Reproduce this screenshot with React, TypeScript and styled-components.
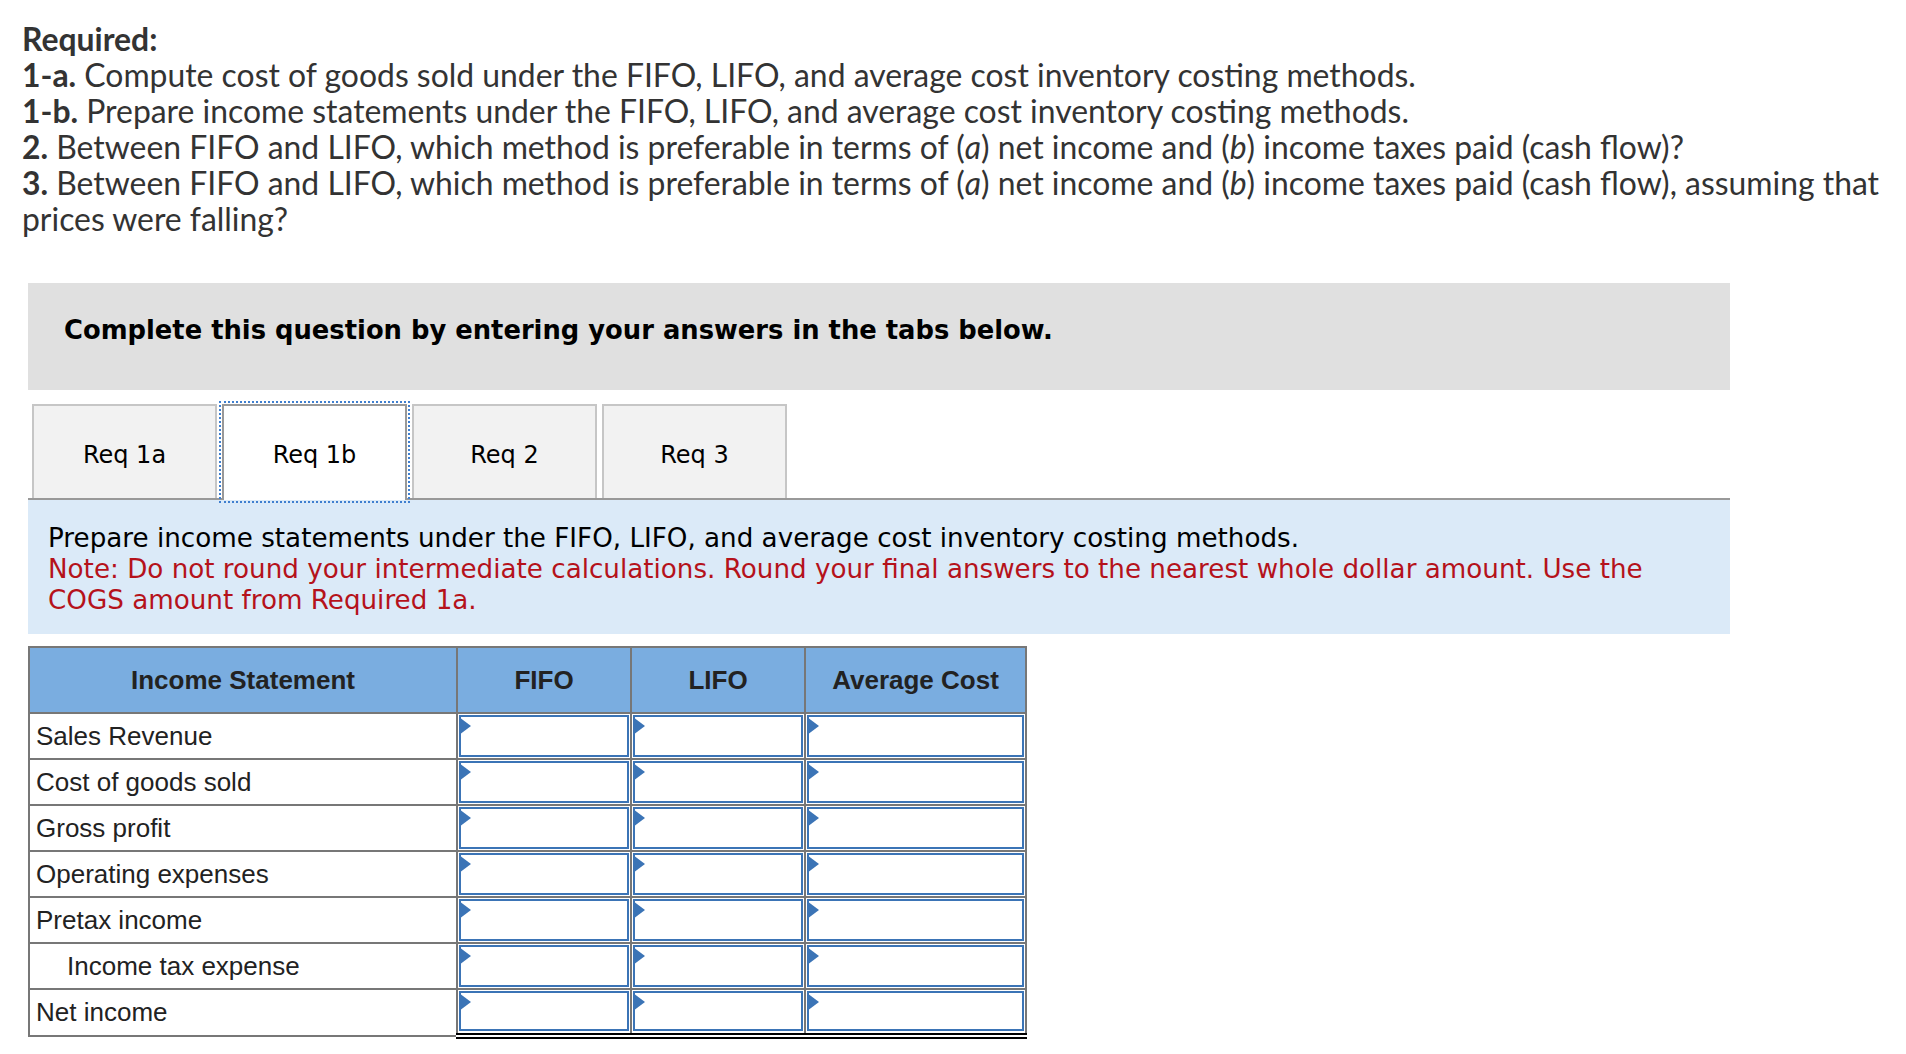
import React from "react";
import styled, { createGlobalStyle } from "styled-components";

const GlobalStyle = createGlobalStyle`
  html, body { margin: 0; padding: 0; background: #ffffff; }
  body { font-family: "Lato", "Liberation Sans", sans-serif; }
`;

const Page = styled.div`
  width: 1906px;
  min-height: 1054px;
  box-sizing: border-box;
  padding-top: 21px;
`;

const Required = styled.div`
  padding-left: 22px;
  font-family: "Lato", "Liberation Sans", sans-serif;
  font-size: 31.9px;
  line-height: 36px;
  color: #333333;
`;

const Line = styled.div`
  white-space: nowrap;
`;

const Strong = styled.b`
  font-weight: 700;
`;

const Question = styled.section`
  margin: 46px 0 0 28px;
  width: 1702px;
`;

const Banner = styled.div`
  background: #e0e0e0;
  padding: 32px 36px 45px;
  font-family: "DejaVu Sans", Verdana, sans-serif;
  font-weight: 700;
  font-size: 25.8px;
  line-height: 30px;
  color: #000000;
  white-space: nowrap;
`;

const TabBar = styled.div`
  display: flex;
  align-items: flex-start;
  gap: 5px;
  margin-top: 14px;
  padding-left: 4px;
  height: 94px;
  border-bottom: 2px solid #999999;
`;

const Tab = styled.button<{ $active?: boolean }>`
  width: 185px;
  height: ${(p) => (p.$active ? "96px" : "94px")};
  box-sizing: border-box;
  margin: 0;
  padding: ${(p) => (p.$active ? "6px 0 2px" : "6px 0 0")};
  background: ${(p) => (p.$active ? "#ffffff" : "#f2f2f2")};
  border: 2px solid ${(p) => (p.$active ? "#999999" : "#c6c6c6")};
  border-bottom: 0;
  outline: ${(p) => (p.$active ? "2px dotted #3f7fcf" : "none")};
  outline-offset: 1px;
  font-family: "DejaVu Sans", Verdana, sans-serif;
  font-size: 24px;
  color: #000000;
  cursor: pointer;
`;

const Info = styled.div`
  background: #dbeaf8;
  padding: 23px 20px 18px;
  font-family: "DejaVu Sans", Verdana, sans-serif;
  font-size: 26.2px;
  line-height: 31px;
  color: #000000;
  white-space: nowrap;
`;

const Note = styled.div`
  color: #b5121b;
`;

const Table = styled.table`
  margin-top: 12px;
  border-collapse: collapse;
  table-layout: fixed;
  width: 998px;
  font-family: "Liberation Sans", Arial, sans-serif;
  font-size: 26px;
  color: #222222;
`;

const HeadCell = styled.th<{ $w: number }>`
  width: ${(p) => p.$w}px;
  height: 64px;
  padding: 0;
  background: #7aade0;
  border: 2px solid #777777;
  font-weight: 700;
  text-align: center;
`;

const LabelCell = styled.td<{ $indent?: boolean }>`
  height: 42px;
  padding: 0 0 0 ${(p) => (p.$indent ? 37 : 6)}px;
  border: 2px solid #777777;
  white-space: nowrap;
  color: #222222;
`;

const AmountCell = styled.td<{ $total?: boolean }>`
  height: 42px;
  padding: 1px 1px ${(p) => (p.$total ? "0" : "1px")};
  border: 2px solid #777777;
  border-bottom: ${(p) => (p.$total ? "6px double #000000" : "2px solid #777777")};
  vertical-align: top;
`;

const AmountWrap = styled.div<{ $total?: boolean }>`
  position: relative;
  height: ${(p) => (p.$total ? "40px" : "42px")};
  &::after {
    content: "";
    position: absolute;
    z-index: 2;
    left: 0;
    top: 2px;
    width: 0;
    height: 0;
    border-left: 12px solid #3b74b6;
    border-top: 9px solid transparent;
    border-bottom: 9px solid transparent;
  }
`;

const AmountInput = styled.input`
  display: block;
  width: 100%;
  height: 100%;
  box-sizing: border-box;
  margin: 0;
  padding: 0 6px;
  border: 2px solid #3b74b6;
  background: #ffffff;
  font-family: "Liberation Sans", Arial, sans-serif;
  font-size: 22px;
  text-align: right;
  outline: none;
`;

const rows: { label: string; indent?: boolean; total?: boolean }[] = [
  { label: "Sales Revenue" },
  { label: "Cost of goods sold" },
  { label: "Gross profit" },
  { label: "Operating expenses" },
  { label: "Pretax income" },
  { label: "Income tax expense", indent: true },
  { label: "Net income", total: true },
];

const tabs = ["Req 1a", "Req 1b", "Req 2", "Req 3"];

export default function App() {
  return (
    <Page>
      <GlobalStyle />
      <Required>
        <Line>
          <Strong>Required:</Strong>
        </Line>
        <Line>
          <Strong>1-a.</Strong> Compute cost of goods sold under the FIFO, LIFO, and average cost inventory costing methods.
        </Line>
        <Line>
          <Strong>1-b.</Strong> Prepare income statements under the FIFO, LIFO, and average cost inventory costing methods.
        </Line>
        <Line>
          <Strong>2.</Strong> Between FIFO and LIFO, which method is preferable in terms of (<i>a</i>) net income and (<i>b</i>) income taxes paid (cash flow)?
        </Line>
        <Line>
          <Strong>3.</Strong> Between FIFO and LIFO, which method is preferable in terms of (<i>a</i>) net income and (<i>b</i>) income taxes paid (cash flow), assuming that
        </Line>
        <Line>prices were falling?</Line>
      </Required>

      <Question>
        <Banner>Complete this question by entering your answers in the tabs below.</Banner>
        <TabBar>
          {tabs.map((t) => (
            <Tab key={t} $active={t === "Req 1b"}>
              {t}
            </Tab>
          ))}
        </TabBar>
        <Info>
          <div>Prepare income statements under the FIFO, LIFO, and average cost inventory costing methods.</div>
          <Note>
            Note: Do not round your intermediate calculations. Round your final answers to the nearest whole dollar amount. Use the
            <br />
            COGS amount from Required 1a.
          </Note>
        </Info>
        <Table>
          <thead>
            <tr>
              <HeadCell $w={426}>Income Statement</HeadCell>
              <HeadCell $w={172}>FIFO</HeadCell>
              <HeadCell $w={172}>LIFO</HeadCell>
              <HeadCell $w={219}>Average Cost</HeadCell>
            </tr>
          </thead>
          <tbody>
            {rows.map((r) => (
              <tr key={r.label}>
                <LabelCell $indent={r.indent}>{r.label}</LabelCell>
                {[0, 1, 2].map((i) => (
                  <AmountCell key={i} $total={r.total}>
                    <AmountWrap $total={r.total}>
                      <AmountInput type="text" aria-label={`${r.label} ${i}`} />
                    </AmountWrap>
                  </AmountCell>
                ))}
              </tr>
            ))}
          </tbody>
        </Table>
      </Question>
    </Page>
  );
}
